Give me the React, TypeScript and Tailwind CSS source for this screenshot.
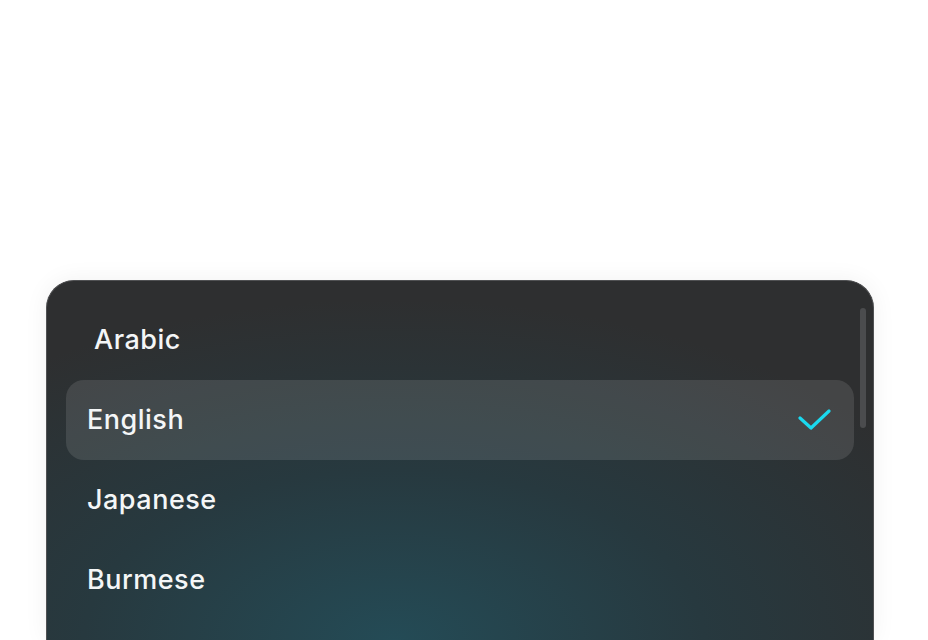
const languages = [
  { name: "Arabic", indent: true },
  { name: "English", selected: true },
  { name: "Japanese" },
  { name: "Burmese" },
];

function Check() {
  return (
    <svg width="34" height="24" viewBox="0 0 34 24" fill="none" className="shrink-0">
      <path
        d="M3 10 L14 20 L32 3"
        stroke="#1ad9ef"
        strokeWidth="3.2"
        strokeLinecap="round"
        strokeLinejoin="round"
      />
    </svg>
  );
}

export default function App() {
  return (
    <div className="min-h-[640px] w-full bg-white overflow-hidden">
      <div className="pt-[280px] pl-[46px]">
        <div
          className="relative w-[828px] h-[361px] overflow-hidden rounded-t-[28px] border border-b-0 border-[#505153] bg-[#2e2f30] bg-[radial-gradient(ellipse_75%_95%_at_42%_100%,#244b56_0%,#27393f_50%,#2e2f30_100%)] shadow-[0_0_24px_rgba(0,0,0,0.06)]"
          style={{ fontFamily: "Inter, 'Open Sans', sans-serif" }}
        >
          <div className="flex flex-col px-[19px] pt-[19px]">
            {languages.map((lang) => (
              <div
                key={lang.name}
                className={`flex h-[80px] shrink-0 items-center justify-between rounded-[18px] pr-[23px] ${
                  lang.indent ? "pl-[28px]" : "pl-[21px]"
                } ${lang.selected ? "bg-[rgba(255,255,255,0.11)]" : ""}`}
              >
                <span className="text-[27px] font-medium tracking-[0.5px] text-[#f4f6f7]">
                  {lang.name}
                </span>
                {lang.selected && <Check />}
              </div>
            ))}
          </div>
          <div className="absolute right-[7px] top-[27px] h-[120px] w-[6px] rounded-full bg-[#4b4c4e]" />
        </div>
      </div>
    </div>
  );
}
